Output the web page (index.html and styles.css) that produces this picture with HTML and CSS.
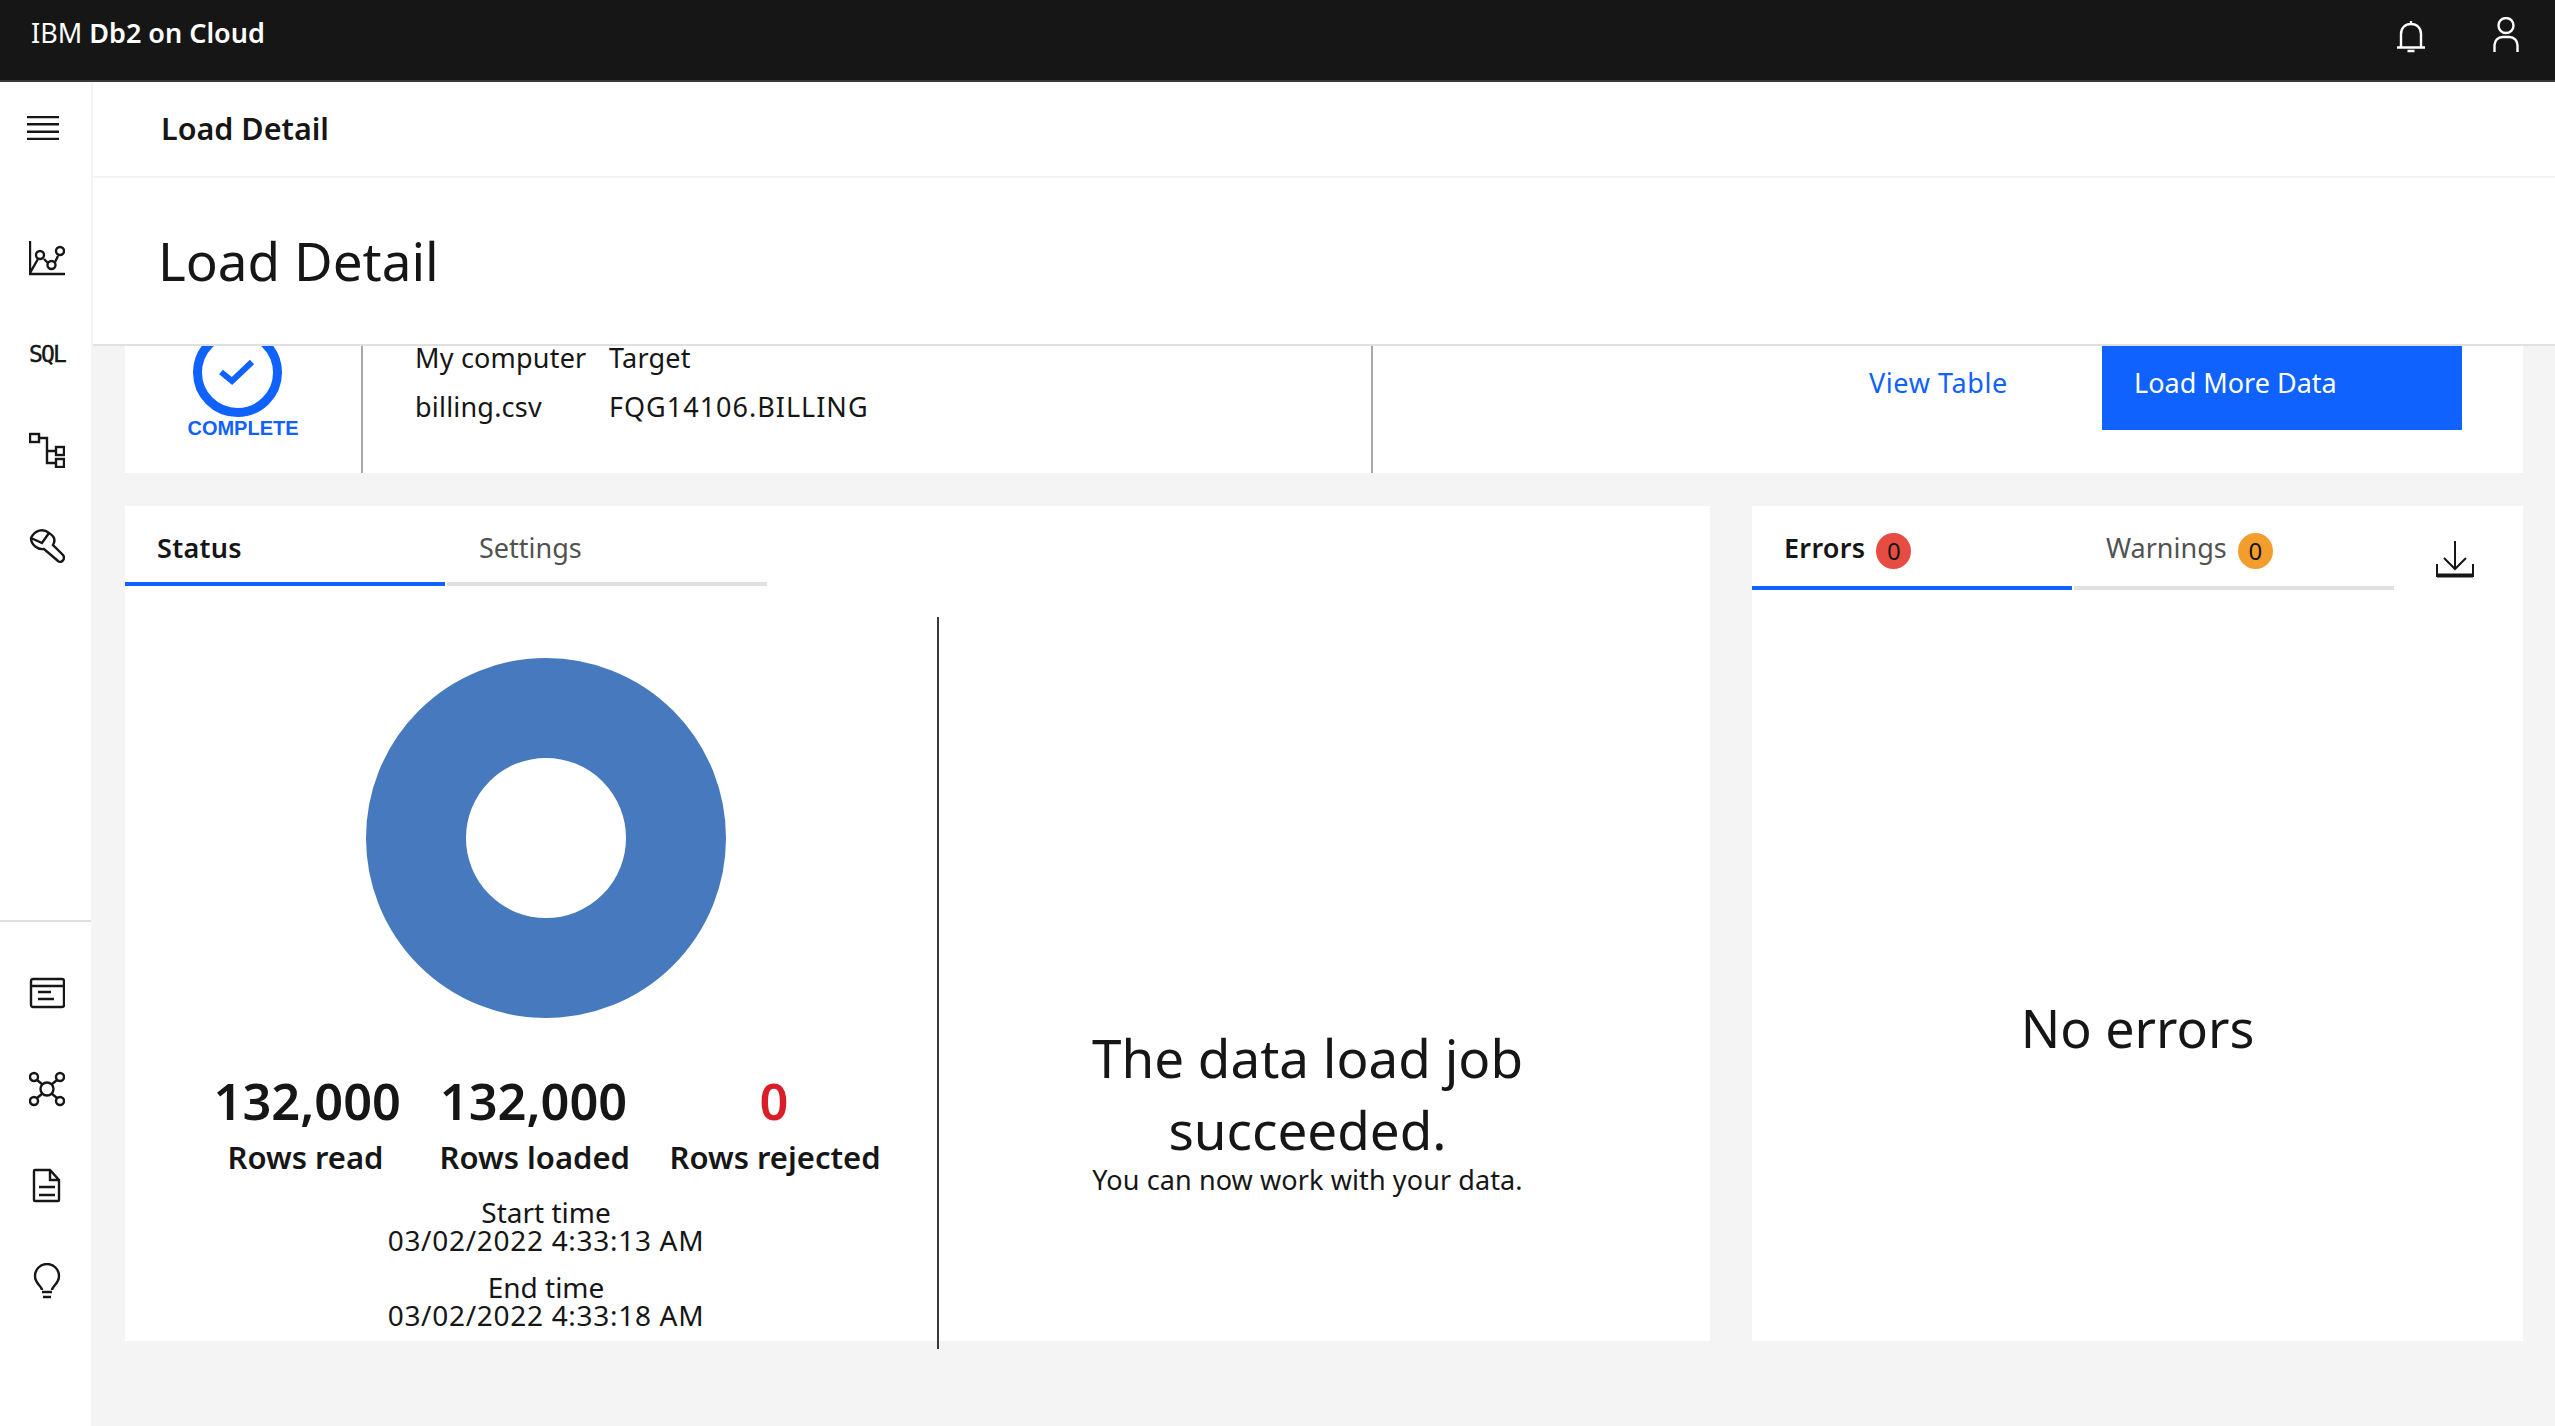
FILE: index.html
```html
<!DOCTYPE html>
<html lang="en">
<head>
  <meta charset="UTF-8">
  <title>Load Detail - IBM Db2 on Cloud</title>
  <link rel="stylesheet" href="styles.css">
</head>
<body>
  <!-- top bar -->
  <header class="topbar">
    <div class="brand">IBM <b>Db2 on Cloud</b></div>
    <div class="top-icons">
      <svg class="bell" width="30" height="34" viewBox="0 0 30 34"><path d="M1 27.500h28M5 27V14c0-6 4-10 10-10s10 4 10 10v13M15 1v3M11.500 31h7" /></svg>
      <svg class="user" width="26" height="35" viewBox="0 0 26 35"><circle cx="13" cy="8.500" r="7.500"/><path d="M1.500 35v-7a8 8 0 0 1 8-8h7a8 8 0 0 1 8 8v7"/></svg>
    </div>
  </header>

  <div class="layout">
    <!-- side nav -->
    <nav class="sidenav">
      <svg class="hamburger" width="32" height="24" viewBox="0 0 32 24"><path d="M0 1h32M0 8.300h32M0 15.700h32M0 23h32"/></svg>
      <div class="nav-group nav-upper">
        <svg width="36" height="36" viewBox="0 0 36 36"><path d="M1 1v33h35M1 33l8-14M15 19l4 4M26 22l3-6"/><circle cx="11" cy="15" r="4"/><circle cx="22.500" cy="25" r="4"/><circle cx="31" cy="11" r="4"/></svg>
        <div class="sql-icon">SQL</div>
        <svg width="36" height="36" viewBox="0 0 36 36"><rect x="1" y="2" width="9" height="8"/><rect x="27" y="15" width="8" height="8"/><rect x="27" y="27" width="8" height="8"/><path d="M10 6h8v25h9M18 19h9"/></svg>
        <svg width="36" height="36" viewBox="0 0 36 36"><path d="M20 5C14 0 6 2 2 10c0 7 7 12 13 11l14 12c3 3 8-2 5-6L24 17c3-5 1-9-4-12zM2 10l11 5 7-10"/></svg>
      </div>
      <div class="nav-divider"></div>
      <div class="nav-group nav-lower">
        <svg width="36" height="36" viewBox="0 0 36 36"><rect x="2" y="4" width="33" height="28" rx="2"/><path d="M2 11h33M9 17h13M9 24h16"/></svg>
        <svg width="36" height="36" viewBox="0 0 36 36"><circle cx="18" cy="18" r="6.500"/><circle cx="5" cy="6" r="4"/><circle cx="31" cy="6" r="4"/><circle cx="5" cy="30" r="4"/><circle cx="31" cy="30" r="4"/><path d="m8 9 5.500 4.500M28 9l-5.500 4.500M8 27l5.500-4.500M28 27l-5.500-4.500"/></svg>
        <svg width="36" height="36" viewBox="0 0 36 36"><path d="M6 3h15l9 10v20a1 1 0 0 1-1 1H6a1 1 0 0 1-1-1V4a1 1 0 0 1 1-1zM21 3v10h9M10 20h16M10 28h16"/></svg>
        <svg width="36" height="36" viewBox="0 0 36 36"><path d="M13 27c0-4-7-6-7-14a12 12 0 0 1 24 0c0 8-7 10-7 14M13 29h10M14 34h8"/></svg>
      </div>
    </nav>

    <main class="main">
      <div class="crumb">Load Detail</div>
      <div class="page-head"><h1>Load Detail</h1></div>

      <!-- scrolled under the page head -->
      <section class="summary">
        <div class="sum-status">
          <svg class="done-ring" width="89" height="89" viewBox="0 0 89 89"><circle cx="44.500" cy="44.500" r="40" class="ring"/><path d="M28 44l11 9 20-19" class="tick"/></svg>
          <div class="done-label">COMPLETE</div>
        </div>
        <div class="sum-meta">
          <div>My computer</div><div>Target</div>
          <div>billing.csv</div><div class="meta-id">FQG14106.BILLING</div>
        </div>
        <div class="sum-actions">
          <a class="link">View Table</a>
          <div class="primary-btn">Load More Data</div>
        </div>
      </section>

      <div class="cards">
        <section class="card card-left">
          <div class="tabs">
            <div class="tab active">Status</div>
            <div class="tab">Settings</div>
          </div>
          <div class="status-body">
            <div class="stats">
              <svg class="donut" width="360" height="360" viewBox="0 0 360 360"><circle cx="180" cy="180" r="130" fill="none" stroke="#4679bd" stroke-width="100"/></svg>
              <div class="numbers">
                <div class="num">132,000</div>
                <div class="num">132,000</div>
                <div class="num rejected">0</div>
                <div class="num-label">Rows read</div>
                <div class="num-label">Rows loaded</div>
                <div class="num-label">Rows rejected</div>
              </div>
              <div class="time">Start time<br><span class="date">03/02/2022 4:33:13 AM</span></div>
              <div class="time time-end">End time<br><span class="date">03/02/2022 4:33:18 AM</span></div>
            </div>
            <div class="message">
              <div class="big-text">The data load job<br>succeeded.</div>
              <div class="sub-text">You can now work with your data.</div>
            </div>
          </div>
        </section>

        <section class="card card-right">
          <div class="tabs tabs-log">
            <div class="tab active">Errors <span class="badge badge-red">0</span></div>
            <div class="tab">Warnings <span class="badge badge-orange">0</span></div>
            <svg class="download" width="38" height="37" viewBox="0 0 38 37"><path d="M19 0v27M8 17l11 11 11-11M1 23v12h36V23"/><path d="M1 34.500h36" class="thick"/></svg>
          </div>
          <div class="no-errors">No errors</div>
        </section>
      </div>
    </main>
  </div>
</body>
</html>
```

FILE: styles.css
```css
* {
  box-sizing: border-box;
}
html, body {
  margin: 0;
  height: 100%;
}
body {
  font-family: "Noto Sans", Arial, sans-serif;
  color: #161616;
  background-color: #f4f4f4;
  overflow: hidden;
}
svg {
  display: block;
  fill: none;
  stroke: #161616;
  stroke-width: 2;
}

/* top bar */
.topbar {
  height: 82px;
  background-color: #161616;
  border-bottom: 2px solid #393939;
  color: #fff;
  display: flex;
  justify-content: space-between;
  padding: 16px 36px 0 31px;
}
.brand {
  font-size: 27px;
  line-height: 34px;
}
.brand b {
  font-weight: 600;
}
.top-icons {
  display: flex;
  gap: 67px;
  padding-top: 1px;
}
.top-icons svg {
  stroke: #fff;
  stroke-width: 2.400;
}
.bell {
  margin-top: 3px;
}

/* side nav */
.layout {
  display: flex;
  height: 1344px;
}
.sidenav {
  width: 93px;
  flex: none;
  background-color: #fff;
  border-right: 2px solid #f4f4f4;
  padding-top: 34px;
}
.sidenav svg {
  stroke-width: 2.400;
}
.hamburger {
  margin-left: 27px;
}
.nav-group {
  display: flex;
  flex-direction: column;
  padding-left: 29px;
}
.nav-upper {
  margin-top: 100px;
  gap: 60px;
}
.nav-lower {
  margin-top: 53px;
  gap: 60px;
}
.nav-divider {
  height: 2px;
  background-color: #e0e0e0;
  margin-top: 356px;
}
.sql-icon {
  height: 36px;
  font-family: "DejaVu Sans Mono", monospace;
  font-size: 23px;
  line-height: 36px;
  letter-spacing: -1.800px;
  -webkit-text-stroke: 0.400px #161616;
}

/* main column */
.main {
  flex: 1;
  min-width: 0;
}
.crumb {
  height: 96px;
  background-color: #fff;
  border-bottom: 2px solid #f4f4f4;
  padding-left: 68px;
  font-size: 30.500px;
  font-weight: 600;
  line-height: 93px;
}
.page-head {
  height: 168px;
  background-color: #fff;
  border-bottom: 2px solid #e0e0e0;
  padding-left: 65px;
}
.page-head h1 {
  margin: 0;
  font-size: 53px;
  font-weight: 400;
  line-height: 166px;
}

/* summary strip */
.summary {
  height: 127px;
  margin: 0 32px;
  background-color: #fff;
  display: flex;
}
.sum-status {
  width: 238px;
  flex: none;
  border-right: 2px solid #a8a8a8;
  display: flex;
  flex-direction: column;
  align-items: center;
  overflow: hidden;
}
.done-ring {
  flex: none;
  margin: -18px 0 0 -12px;
}
.ring {
  stroke: #0f62fe;
  stroke-width: 9;
}
.tick {
  stroke: #0f62fe;
  stroke-width: 6;
}
.done-label {
  color: #0f62fe;
  font-family: "Liberation Sans", Arial, sans-serif;
  font-size: 20px;
  font-weight: 700;
  line-height: 24px;
  margin-top: -1px;
}
.sum-meta {
  width: 1010px;
  flex: none;
  border-right: 2px solid #a8a8a8;
  padding-left: 52px;
  display: grid;
  grid-template-columns: 194px 1fr;
  grid-auto-rows: 24px;
  row-gap: 25px;
  font-size: 27px;
  line-height: 24px;
  letter-spacing: 0.200px;
}
.meta-id {
  letter-spacing: 1px;
}
.sum-actions {
  flex: 1;
  display: flex;
  justify-content: flex-end;
  padding-right: 61px;
  align-items: flex-start;
  font-size: 27px;
  line-height: 74px;
}
.link {
  width: 233px;
  color: #0f62fe;
  letter-spacing: 0.600px;
}
.primary-btn {
  width: 360px;
  height: 84px;
  background-color: #0f62fe;
  color: #fff;
  padding-left: 32px;
}

/* cards */
.cards {
  display: flex;
  gap: 42px;
  margin: 33px 32px 0;
}
.card {
  height: 835px;
  background-color: #fff;
}
.card-left {
  flex: 1;
}
.card-right {
  width: 771px;
  flex: none;
}
.tabs {
  display: flex;
  gap: 2px;
  width: 642px;
}
.tabs-log {
  position: relative;
}
.tab {
  width: 320px;
  height: 80px;
  padding-left: 32px;
  border-bottom: 4px solid #e0e0e0;
  color: #525252;
  font-size: 27px;
  line-height: 84px;
  white-space: nowrap;
}
.tabs-log .tab {
  height: 84px;
  line-height: 83px;
  display: flex;
  gap: 11px;
  align-items: flex-start;
}
.tab.active {
  border-bottom-color: #0f62fe;
  color: #161616;
  font-weight: 600;
  letter-spacing: 0.300px;
}
.badge {
  display: block;
  width: 35px;
  height: 36px;
  border-radius: 50%;
  margin-top: 27px;
  color: #161616;
  font-size: 24px;
  font-weight: 400;
  letter-spacing: 0;
  line-height: 36px;
  text-align: center;
}
.badge-red {
  background-color: #e74c43;
}
.badge-orange {
  background-color: #f29d2d;
}
.download {
  position: absolute;
  left: 684px;
  top: 35px;
}
.thick {
  stroke-width: 4;
}

/* status panel */
.status-body {
  display: flex;
  height: 732px;
  margin-top: 31px;
}
.stats {
  width: 814px;
  flex: none;
  border-right: 2px solid #393939;
  padding-left: 30px;
  text-align: center;
}
.donut {
  margin: 41px auto 0;
}
.numbers {
  display: grid;
  grid-template-columns: 184px 188px 209px;
  column-gap: 42px;
  justify-content: center;
  margin-top: 53px;
}
.num {
  font-size: 50.500px;
  font-weight: 600;
  line-height: 60px;
  margin-bottom: 6px;
}
.rejected {
  color: #da1e28;
}
.num-label {
  font-size: 31px;
  font-weight: 600;
  line-height: 40px;
  white-space: nowrap;
}
.time {
  margin-top: 21px;
  font-size: 28px;
  line-height: 28px;
}
.time-end {
  margin-top: 19px;
}
.date {
  letter-spacing: 0.700px;
}
.message {
  flex: 1;
  padding: 405px 34px 0 0;
  text-align: center;
}
.big-text {
  font-size: 53px;
  line-height: 72px;
}
.sub-text {
  font-size: 27px;
  letter-spacing: 0.100px;
  line-height: 28px;
}
.no-errors {
  padding-top: 402px;
  text-align: center;
  font-size: 52px;
  line-height: 72px;
}
```
